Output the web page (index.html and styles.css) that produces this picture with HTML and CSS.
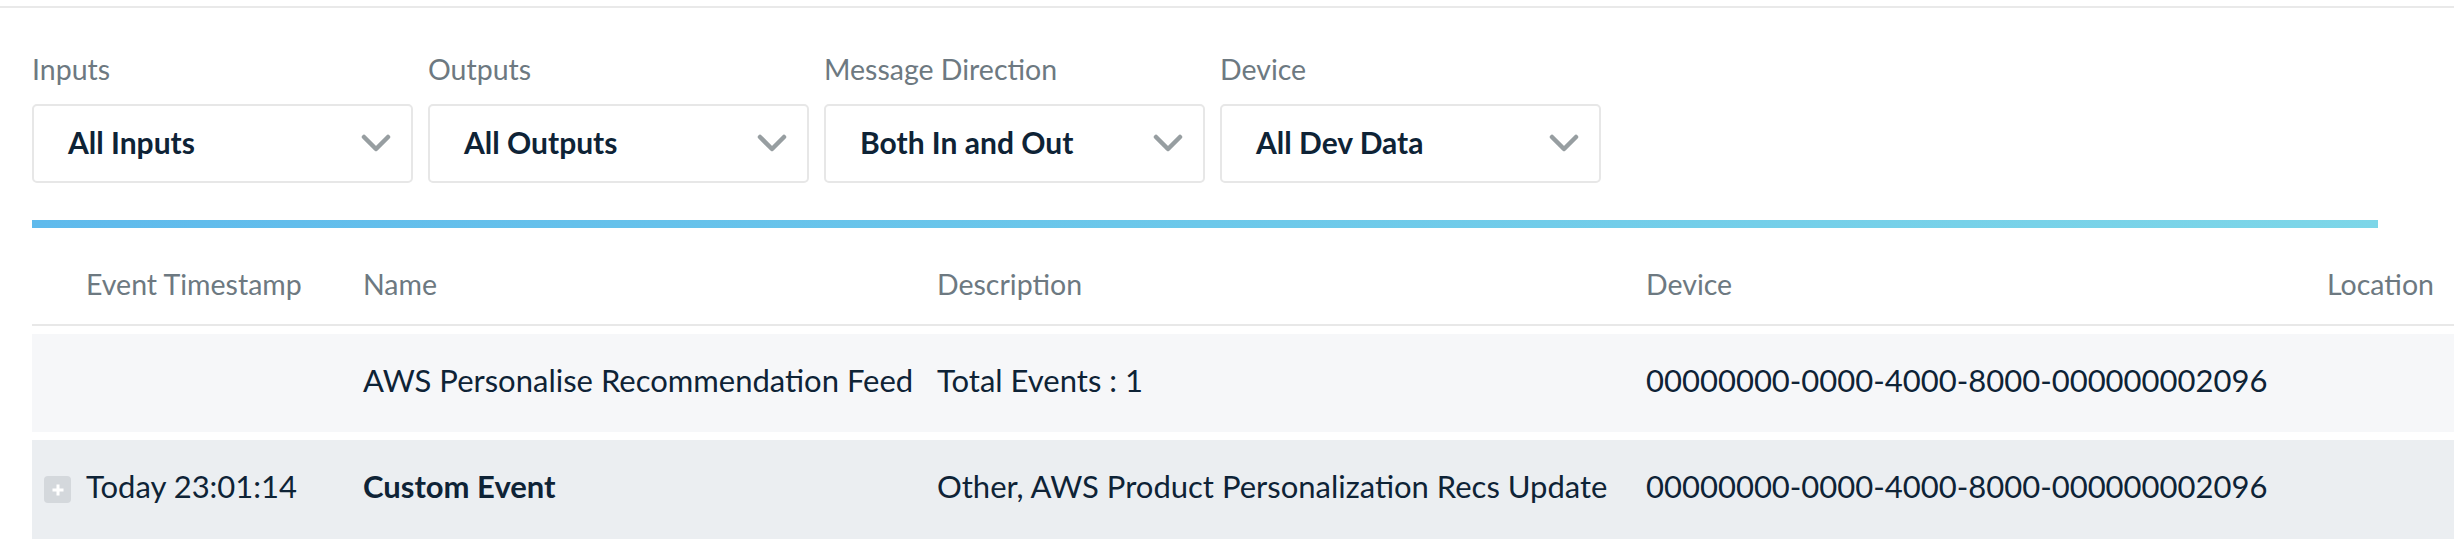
FILE: index.html
```html
<!DOCTYPE html>
<html lang="en">
<head>
<meta charset="utf-8">
<title>Events</title>
<link rel="stylesheet" href="styles.css">
</head>
<body>
<div class="topline"></div>
<div class="page">
  <div class="filters">
    <div class="filter">
      <div class="label">Inputs</div>
      <div class="select"><span class="value">All Inputs</span><svg class="chev" width="30" height="20" viewBox="0 0 30 20"><polyline points="3,3 15,15 27,3" fill="none" stroke="#979ea1" stroke-width="4.5" stroke-linecap="round" stroke-linejoin="round"/></svg></div>
    </div>
    <div class="filter">
      <div class="label">Outputs</div>
      <div class="select"><span class="value">All Outputs</span><svg class="chev" width="30" height="20" viewBox="0 0 30 20"><polyline points="3,3 15,15 27,3" fill="none" stroke="#979ea1" stroke-width="4.5" stroke-linecap="round" stroke-linejoin="round"/></svg></div>
    </div>
    <div class="filter">
      <div class="label">Message Direction</div>
      <div class="select"><span class="value">Both In and Out</span><svg class="chev" width="30" height="20" viewBox="0 0 30 20"><polyline points="3,3 15,15 27,3" fill="none" stroke="#979ea1" stroke-width="4.5" stroke-linecap="round" stroke-linejoin="round"/></svg></div>
    </div>
    <div class="filter">
      <div class="label">Device</div>
      <div class="select"><span class="value">All Dev Data</span><svg class="chev" width="30" height="20" viewBox="0 0 30 20"><polyline points="3,3 15,15 27,3" fill="none" stroke="#979ea1" stroke-width="4.5" stroke-linecap="round" stroke-linejoin="round"/></svg></div>
    </div>
  </div>
  <div class="bar"></div>
  <div class="table">
    <div class="row head">
      <div class="cell c1 pad">Event Timestamp</div>
      <div class="cell">Name</div>
      <div class="cell">Description</div>
      <div class="cell">Device</div>
      <div class="cell">Location</div>
    </div>
    <div class="row group">
      <div class="cell c1 pad"></div>
      <div class="cell">AWS Personalise Recommendation Feed</div>
      <div class="cell">Total Events : 1</div>
      <div class="cell">00000000-0000-4000-8000-000000002096</div>
      <div class="cell"></div>
    </div>
    <div class="row event">
      <div class="cell c1"><span class="plus"></span>Today 23:01:14</div>
      <div class="cell strong">Custom Event</div>
      <div class="cell">Other, AWS Product Personalization Recs Update</div>
      <div class="cell">00000000-0000-4000-8000-000000002096</div>
      <div class="cell"></div>
    </div>
  </div>
</div>
</body>
</html>
```
FILE: styles.css
```css
html, body {
  margin: 0;
  padding: 0;
  background: #ffffff;
  overflow: hidden;
}
body {
  font-family: "Lato", "Open Sans", sans-serif;
  color: #0e2336;
}
.topline {
  margin-top: 6px;
  height: 2px;
  background: #e9e9e9;
}
.page {
  padding: 44px 0 0 32px;
  width: 2346px;
}
.filters {
  display: flex;
  gap: 15px;
}
.filter {
  width: 381px;
  display: flex;
  flex-direction: column;
}
.label {
  font-size: 28.5px;
  line-height: 34px;
  color: #6d7981;
  margin-bottom: 18px;
  white-space: nowrap;
}
.select {
  box-sizing: border-box;
  height: 79px;
  border: 2px solid #e7e7e7;
  border-radius: 5px;
  display: flex;
  align-items: center;
  justify-content: space-between;
  padding: 0 20px 4px 34px;
}
.value {
  font-size: 30px;
  line-height: 36px;
  font-weight: 700;
  color: #0e2336;
  white-space: nowrap;
}
.chev {
  display: block;
  margin-top: 4px;
}
.bar {
  margin-top: 37px;
  height: 8px;
  background: linear-gradient(90deg, #5fbaec 0%, #6cc8ea 50%, #7dd6e8 100%);
}
.table {
  display: flex;
  flex-direction: column;
  gap: 8px;
  width: 2700px;
}
.row {
  display: grid;
  grid-template-columns: 331px 574px 709px 681px 405px;
  align-items: center;
  white-space: nowrap;
}
.cell {
  display: flex;
  align-items: center;
}
.head {
  font-size: 28.5px;
  line-height: 34px;
  color: #6d7981;
  padding: 39px 0 23px 0;
  border-bottom: 2px solid #e8e8e8;
}
.pad {
  padding-left: 54px;
}
.group, .event {
  font-size: 31px;
  line-height: 38px;
  box-sizing: border-box;
  padding-bottom: 7px;
}
.group {
  height: 98px;
  background: #f6f7f9;
}
.event {
  height: 99px;
  background: #ebeef1;
}
.strong {
  font-weight: 700;
}
.plus {
  position: relative;
  width: 27px;
  height: 27px;
  border-radius: 4px;
  background: #d4d8dc;
  margin: 7px 15px 0 12px;
  flex: none;
}
.plus::before, .plus::after {
  content: "";
  position: absolute;
  background: #ffffff;
  left: 50%;
  top: 50%;
  transform: translate(-50%, -50%);
}
.plus::before {
  width: 11px;
  height: 3px;
}
.plus::after {
  width: 3px;
  height: 11px;
}
```
